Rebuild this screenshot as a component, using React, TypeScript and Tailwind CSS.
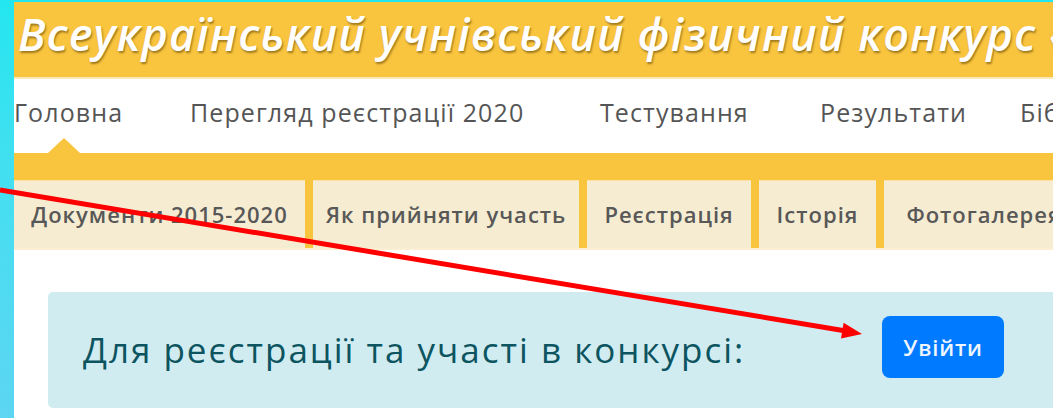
import React from 'react';

const navItems = [
  { label: 'Головна', w: 'w-[176px]' },
  { label: 'Перегляд реєстрації 2020', w: 'w-[410px]' },
  { label: 'Тестування', w: 'w-[220px]' },
  { label: 'Результати', w: 'w-[200px]' },
  { label: 'Бібліотека', w: 'w-[160px]' },
];

const tabs = [
  { label: 'Документи 2015-2020', w: 'w-[291px]' },
  { label: 'Як прийняти участь', w: 'w-[266px]' },
  { label: 'Реєстрація', w: 'w-[164px]' },
  { label: 'Історія', w: 'w-[117px]' },
  { label: 'Фотогалерея', w: 'w-[200px]' },
];

const App = () => {
  return (
    <div className="relative w-[1053px] h-[418px] overflow-hidden bg-white flex font-['Open_Sans',sans-serif]">
      {/* side strip */}
      <div className="w-[14px] shrink-0 bg-gradient-to-b from-[#22e6ef] to-[#5cd5f2]" />

      <div className="flex-1 flex flex-col min-w-0">
        <div className="h-[2px] bg-[#22e6ef]" />

        {/* Title bar */}
        <div className="h-[75px] bg-[#f9c53e] flex items-center pl-[4px] overflow-hidden">
          <h1 className="whitespace-nowrap italic font-semibold text-[45px] leading-none text-white tracking-[1.1px] [text-shadow:1px_2px_2px_rgba(90,60,0,0.55)] -mt-[12px]">
            Всеукраїнський учнівський фізичний конкурс «Левеня»
          </h1>
        </div>

        {/* Main menu */}
        <div className="relative h-[76px] bg-white border-t-2 border-[#fde9b8] flex items-center overflow-hidden">
          {navItems.map((item) => (
            <span
              key={item.label}
              className={`${item.w} shrink-0 whitespace-nowrap text-[25px] tracking-[1.1px] text-[#555] -mt-[6px]`}
            >
              {item.label}
            </span>
          ))}
          <div className="absolute left-[34px] bottom-0 w-0 h-0 border-l-[16px] border-r-[16px] border-b-[15px] border-l-transparent border-r-transparent border-b-[#f9c53e]" />
        </div>

        {/* Sub menu */}
        <div className="bg-[#f9c53e] pt-[27px]">
          <div className="flex gap-[8px] h-[68px] overflow-hidden">
            {tabs.map((tab) => (
              <div
                key={tab.label}
                className={`${tab.w} shrink-0 bg-[#f6ecd2] border-t border-[#fbe1a4] flex items-center justify-center whitespace-nowrap text-[22px] tracking-[1px] text-[#585858] font-semibold`}
              >
                {tab.label}
              </div>
            ))}
          </div>
        </div>
        <div className="h-[2px] bg-[#fbeed2]" />

        {/* Login prompt */}
        <div className="pt-[42px] pl-[34px]">
          <div className="h-[116px] bg-[#d1ecf1] rounded-l-[5px] flex items-center pl-[35px]">
            <span className="text-[35px] tracking-[2px] text-[#0c5460] whitespace-nowrap w-[799px]">
              Для реєстрації та участі в конкурсі:
            </span>
            <button className="w-[122px] h-[62px] -mt-[6px] rounded-[8px] bg-[#007bff] text-[#eef5ff] text-[22px] tracking-[0.8px] font-semibold">
              Увійти
            </button>
          </div>
        </div>
      </div>

      {/* annotation arrow */}
      <svg className="absolute inset-0 pointer-events-none" width="1053" height="418">
        <line x1="0" y1="190" x2="846" y2="331" stroke="#ff0000" strokeWidth="5" />
        <polygon points="862,334 843.6,322.8 841,338.6" fill="#ff0000" />
      </svg>
    </div>
  );
};

export default App;
